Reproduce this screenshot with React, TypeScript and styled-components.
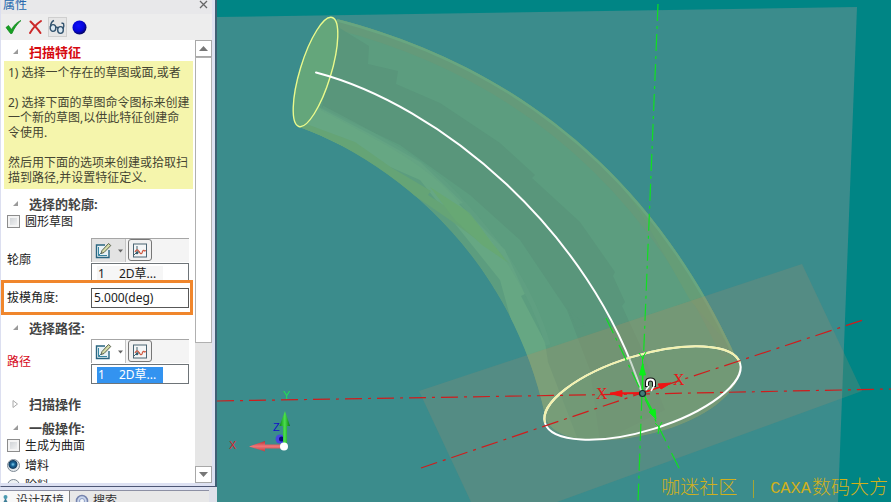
import React from "react";
import styled, { createGlobalStyle } from "styled-components";

const GlobalStyle = createGlobalStyle`
  * { box-sizing: border-box; }
  body {
    margin: 0;
    font-family: "Noto Sans", "Noto Sans CJK SC", sans-serif;
    font-size: 12px;
    line-height: 15px;
    color: #1c1c1c;
  }
  button, input { font: inherit; color: inherit; }
  button { padding: 0; margin: 0; border: 0; background: none; cursor: pointer; }
  h2, p, ul { margin: 0; padding: 0; }
`;

const Page = styled.div`
  display: flex;
  height: 100vh;
  overflow: hidden;
  background: #008585;
`;

const Sidebar = styled.aside`
  flex: none;
  display: flex;
  flex-direction: column;
  width: 217px;
  background: #e9e9eb;
`;

const Panel = styled.section`
  flex: 1;
  min-height: 0;
  display: flex;
  flex-direction: column;
  padding: 0 3px 3px 0;
  border-left: 1px solid #dcdff0;
  border-right: 2px solid #3f5f74;
  border-bottom: 1px solid #4d5674;
  background: #dde1f2;
`;

const TitleBar = styled.header`
  flex: none;
  display: flex;
  justify-content: space-between;
  height: 14px;
  padding: 0 4px 0 2px;
  line-height: 9px;
  color: #2668ad;
  background: #e8e8ea;
`;

const CloseButton = styled.button`
  display: flex;
  width: 9px;
  height: 9px;
`;

const Toolbar = styled.div`
  flex: none;
  display: flex;
  align-items: center;
  gap: 3px;
  height: 26px;
  padding-left: 3px;
  background: #ededed;
`;

const ToolButton = styled.button<{ $boxed?: boolean }>`
  display: flex;
  align-items: center;
  justify-content: center;
  width: 19px;
  height: 20px;
  border: 1px solid ${(p) => (p.$boxed ? "#cfcfcf" : "transparent")};
  background: ${(p) => (p.$boxed ? "#e6e6e6" : "none")};
`;

const Body = styled.div`
  flex: 1;
  min-height: 0;
  display: flex;
  background: #fff;
`;

const Content = styled.div`
  flex: 1;
  min-width: 0;
  overflow: hidden;
`;

const SectionHead = styled.h2<{ $gap: number; $alert?: boolean }>`
  margin-top: ${(p) => p.$gap}px;
  font-size: 13px;
  line-height: 18px;
  font-weight: 700;
  color: ${(p) => (p.$alert ? "#d60a10" : "#444")};
`;

const SectionToggle = styled.button`
  display: flex;
  align-items: center;
  gap: 10px;
  height: 18px;
  padding-left: 10px;
`;

const Note = styled.div`
  display: flex;
  flex-direction: column;
  gap: 15px;
  margin: 0 2px 0 3px;
  padding: 4px 0 4px 4px;
  white-space: nowrap;
  color: #454532;
  background: #f5f5ac;
`;

const OptionRow = styled.label<{ $gap?: number }>`
  display: flex;
  align-items: center;
  gap: 5px;
  height: 16px;
  margin-top: ${(p) => p.$gap ?? 0}px;
  padding-left: 6px;
`;

const CheckBox = styled.input`
  appearance: none;
  width: 13px;
  height: 13px;
  margin: 0;
  border: 1px solid #8c8c8c;
  background: linear-gradient(135deg, #c8ccd0, #f8f8f8);
  box-shadow: inset 0 0 0 2px #f4f4f4;
`;

const RadioButton = styled.input`
  appearance: none;
  width: 13px;
  height: 13px;
  margin: 0;
  border: 1px solid #7c8894;
  border-radius: 50%;
  background: #eef1f3;
  &:checked {
    background: radial-gradient(circle at 45% 40%, #7fd0f0 0, #17669a 2px, #123f63 4px, #e3e8ec 5px);
  }
`;

const Field = styled.div<{ $gap: number }>`
  display: grid;
  grid-template-columns: 84px 1fr;
  align-items: center;
  margin-top: ${(p) => p.$gap}px;
  padding: 0 6px;
`;

const FieldLabel = styled.span<{ $alert?: boolean }>`
  color: ${(p) => (p.$alert ? "#d60a20" : "#1c1c1c")};
`;

const Picker = styled.div`
  display: flex;
  flex-direction: column;
  gap: 1px;
  min-width: 0;
`;

const PickerTools = styled.div`
  display: flex;
  gap: 2px;
  height: 24px;
  border-top: 1px solid #a6a6a6;
  border-left: 1px solid #a6a6a6;
  background: #f4f4f4;
`;

const SplitButton = styled.button<{ $active?: boolean }>`
  display: flex;
  align-items: center;
  gap: 6px;
  width: 34px;
  padding-left: 3px;
  border-right: 1px solid #c4c4c4;
  background: ${(p) => (p.$active ? "#e3e3e3" : "#fff")};
`;

const CurveButton = styled.button`
  display: flex;
  align-items: center;
  justify-content: center;
  width: 24px;
  height: 22px;
  border: 1px solid #777;
  border-radius: 3px;
  background: #f1f1f1;
`;

const PickList = styled.ul<{ $open?: boolean }>`
  height: ${(p) => (p.$open ? 17 : 20)}px;
  padding: 2px 5px;
  border: 1px solid #6e7478;
  border-bottom-width: ${(p) => (p.$open ? 0 : 1)}px;
  list-style: none;
  background: #fff;
  overflow: hidden;
`;

const PickItem = styled.li<{ $selected?: boolean }>`
  display: flex;
  gap: 14px;
  width: 66px;
  padding-left: 1px;
  line-height: 16px;
  white-space: nowrap;
  color: ${(p) => (p.$selected ? "#fff" : "#1c1c1c")};
  background: ${(p) => (p.$selected ? "#3393f0" : "#f6f6f6")};
`;

const Highlight = styled.div`
  display: grid;
  grid-template-columns: 84px 1fr;
  align-items: center;
  height: 35px;
  margin-right: 2px;
  padding: 0 1px 0 3px;
  border: 3px solid #f0862c;
`;

const AngleInput = styled.input`
  width: 100%;
  min-width: 0;
  height: 20px;
  padding: 0 2px;
  border: 1px solid #585858;
  background: #fff;
`;

const ScrollBar = styled.div`
  flex: none;
  display: grid;
  grid-template-rows: 17px 7fr 3fr 17px;
  width: 17px;
  background: #e6e6e6;
`;

const ScrollButton = styled.button`
  display: flex;
  align-items: center;
  justify-content: center;
  border: 1px solid #a8a8a8;
  background: #fff;
`;

const ScrollThumb = styled.div`
  border: 1px solid #b0b0b0;
  background: #fff;
`;

const TabStrip = styled.nav`
  flex: none;
  height: 15px;
  padding-top: 3px;
  border-right: 8px solid #dfe1ea;
  background: #e8e8e8;
  box-shadow: inset 0 3px 0 #dde1f2, inset 0 4px 0 #8d90a4;
  overflow: hidden;
`;

const TabRow = styled.div`
  display: flex;
`;

const Tab = styled.button<{ $active?: boolean }>`
  display: flex;
  align-items: center;
  gap: 4px;
  height: 20px;
  padding: 0 5px 0 ${(p) => (p.$active ? 0 : 5)}px;
  border-top: 1px solid #8d90a4;
  border-right: ${(p) => (p.$active ? "1px solid #808080" : "0")};
  color: #333;
  background: ${(p) => (p.$active ? "#f8f8f8" : "transparent")};
`;

const Viewport = styled.main`
  position: relative;
  flex: 1;
  min-width: 0;
`;

const SceneSvg = styled.svg`
  display: block;
  width: 100%;
  height: 100%;
`;

const Watermark = styled.div`
  position: absolute;
  right: 3px;
  bottom: 0;
  display: flex;
  align-items: center;
  gap: 1px;
  font-family: "Liberation Mono", "Noto Sans CJK SC", monospace;
  font-weight: 300;
  font-size: 19px;
  line-height: 26px;
  color: #d0b01c;
`;

const WatermarkBar = styled.span`
  width: 1px;
  height: 18px;
  margin: 0 15px;
  background: #a5a534;
`;

const WatermarkLatin = styled.span`
  font-size: 17px;
`;

const OpenMark = () => (
  <svg width="8" height="8" aria-hidden="true"><path d="M7 1V6H2Z" fill="#9a9a9a" /></svg>
);
const ClosedMark = () => (
  <svg width="8" height="8" aria-hidden="true"><path d="M2 0.5 6.5 4 2 7.5Z" fill="#fff" stroke="#aaa" /></svg>
);

const CheckIcon = () => (
  <svg width="17" height="16" viewBox="0 0 17 16" aria-hidden="true">
    <path d="M1 8.5 3.5 6.5 6.5 10.5C9 6 12 3 16 1.500 12 5 9 9.500 7 14.500H5.500Z" fill="#16a022" stroke="#0c8418" strokeWidth=".7" />
  </svg>
);
const CrossIcon = () => (
  <svg width="15" height="16" viewBox="0 0 15 16" aria-hidden="true">
    <path d="M2.500 2.500C6 6 10 10 12.500 14M13 2C8.500 5 5 9 2 14" fill="none" stroke="#cc2929" strokeWidth="2" strokeLinecap="round" />
  </svg>
);
const GlassesIcon = () => (
  <svg width="17" height="16" viewBox="0 0 17 16" aria-hidden="true">
    <g fill="#dce9f2" stroke="#31526e" strokeWidth="1.400">
      <ellipse cx="4" cy="9" rx="2.800" ry="3.400" />
      <ellipse cx="11.500" cy="11" rx="2.800" ry="3.400" />
      <path d="M6.500 8.500Q8 7.500 9 9.500M1.500 8Q1.500 3 5 1.500M14 10Q15.500 7 14.500 4.500L12.500 4" fill="none" />
    </g>
  </svg>
);
const SphereIcon = () => (
  <svg width="15" height="15" viewBox="0 0 15 15" aria-hidden="true">
    <defs>
      <radialGradient id="sphere" cx=".42" cy=".38" r=".6">
        <stop offset="0" stopColor="#1010ff" /><stop offset=".65" stopColor="#0505d8" /><stop offset="1" stopColor="#050568" />
      </radialGradient>
    </defs>
    <circle cx="7.500" cy="7.500" r="7" fill="url(#sphere)" />
  </svg>
);
const SketchIcon = () => (
  <svg width="17" height="17" viewBox="0 0 17 17" aria-hidden="true">
    <path d="M10 3H1.500V15.500H14V8" fill="#e8f2f6" stroke="#2a6580" strokeWidth="1.400" />
    <path d="M3.500 5V13.500H12M3.500 13.500 6 11" fill="none" stroke="#3785a0" />
    <path d="M6 11.500 7 8.500 13.500 1.500 15.800 3.500 9 10.500Z" fill="#d4dca8" stroke="#59604e" />
  </svg>
);
const CurveIcon = () => (
  <svg width="16" height="15" viewBox="0 0 16 15" aria-hidden="true">
    <rect x="1.500" y="1" width="13" height="13" fill="#f4f6f7" stroke="#4a6473" />
    <path d="M2 12 5 9V3M5 9H8" fill="none" stroke="#43606c" />
    <path d="M3 9Q5 5 7 8.500T10 10Q11 6 12.500 8L14 7.500" fill="none" stroke="#cf5840" strokeWidth="1.200" />
    <circle cx="5" cy="10" r="1.300" fill="#345e70" />
  </svg>
);
const DropIcon = () => (
  <svg width="6" height="4" aria-hidden="true"><path d="M0 .5H5L2.500 3.500Z" fill="#666" /></svg>
);

const Section = ({ title, gap, alert, closed }: { title: string; gap: number; alert?: boolean; closed?: boolean }) => (
  <SectionHead $gap={gap} $alert={alert}>
    <SectionToggle type="button" aria-expanded={!closed}>
      {closed ? <ClosedMark /> : <OpenMark />}
      {title}
    </SectionToggle>
  </SectionHead>
);

const SketchPicker = ({ label, active, selected }: { label: string; active?: boolean; selected?: boolean }) => (
  <Picker>
    <PickerTools>
      <SplitButton type="button" $active={active} aria-label={`${label} 草图`}><SketchIcon /><DropIcon /></SplitButton>
      <CurveButton type="button" aria-label={`${label} 曲线`}><CurveIcon /></CurveButton>
    </PickerTools>
    <PickList $open={active} role="listbox" aria-label={label}>
      <PickItem $selected={selected} role="option" aria-selected={!!selected}>
        <span>1</span><span>2D草...</span>
      </PickItem>
    </PickList>
  </Picker>
);

const OUTLINE = "M337 19C475 55 635 140 734 353L741 366C741 395 700 420 665 430C610 447 550 444 545 415C510 255 392 160 299 127Z";

const Scene = () => (
  <SceneSvg viewBox="217 0 674 502" preserveAspectRatio="xMidYMid slice" role="img" aria-label="3D">
    <defs>
      <clipPath id="pipe"><path d={OUTLINE} /></clipPath>
      <linearGradient id="greenArrow"><stop offset="0" stopColor="#0a8a14" /><stop offset=".5" stopColor="#4be04e" /><stop offset="1" stopColor="#087a10" /></linearGradient>
      <linearGradient id="redArrow" x2="0" y2="1"><stop offset="0" stopColor="#b52f34" /><stop offset=".5" stopColor="#f07678" /><stop offset="1" stopColor="#c03c40" /></linearGradient>
    </defs>
    <rect x="217" width="674" height="502" fill="#008585" />
    <path d="M217 17 857 7 838 502H217Z" fill="#3b8c8c" />

    <g clipPath="url(#pipe)">
      <path d={OUTLINE} fill="#5c9d7f" />
      <path d="M337 24C475 60 630 145 727 356" fill="none" stroke="#649a7a" strokeWidth="11" />
      <path d="M535 108C580 140 615 175 640 212L690 300 735 352 700 230 600 130Z" fill="#659d77" />
      <path d="M337 19C475 55 635 140 734 353" fill="none" stroke="#68a680" strokeWidth="5" />
      <path d="M333 24 369 46 368 64 398 71 396 84 440 103 500 143 535 175 532 178 580 222 615 272 613 276 625 302 622 306 640 345 665 410 600 442 590 370 567 310 520 240 470 195 400 145 322 108Z" fill="#59967b" />
      <path d="M318 107 370 134 420 162 463 203 459 204 505 250 525 294 521 296 545 342 548 362 580 445 540 425 500 280 420 180 299 127Z" fill="#66a783" />
      <path d="M301 122 355 142 392 168 431 191 428 195 470 222 495 250 509 263 480 242 450 220 380 172 299 127Z" fill="#65a476" />
      <path d="M430 187 470 213 492 243 510 264 482 245 455 220Z" fill="#67a874" />
      <path d="M322 108C380 138 430 163 461 201C510 253 535 300 548 345" fill="none" stroke="#61a183" strokeWidth="5" opacity=".5" />
      <path d="M567 307 575 316 586 325 577 328Z" fill="#59967b" />
    </g>

    <path d="M419 391 802 264 862 391 557 502H471Z" fill="#a08c6c" opacity=".25" />
    <path d="M419 391 802 264 862 391 557 502H471Z" fill="#b79a58" opacity=".1" clipPath="url(#pipe)" />

    <ellipse cx="315.500" cy="72" rx="15.500" ry="57" transform="rotate(17 315.500 72)" fill="#64a67b" stroke="#eafa8c" strokeWidth="1.400" />
    <path d="M316 72.500C440 105 590 230 642 393" fill="none" stroke="#fff" strokeWidth="2" strokeLinecap="round" />
    <ellipse cx="642.500" cy="393" rx="102" ry="37.500" transform="rotate(-17.100 642.500 393)" fill="#719a79" fillOpacity=".35" stroke="#fff" strokeWidth="2" />
    <path d="M545 423A102 37.500 -17.100 0 1 740 363" fill="none" stroke="#f3f2ae" strokeWidth="2" />

    <g fill="none" strokeWidth="1.200">
      <g stroke="#d01c1c" strokeDasharray="17 6 3 6">
        <path d="M217 401 642 394 891 389" />
        <path d="M421 468 642 393 863 320" />
      </g>
      <g stroke="#10e020" strokeDasharray="17 5 3 5">
        <path d="M658 4 642 393 638 502" />
        <path d="M606 318 642 393 680 470" />
      </g>
    </g>

    <g fill="#f01414" stroke="#f01414">
      <path d="M642 393 610 393.500" strokeWidth="2" />
      <path d="M610 393.500 622 390.500V396.500Z" />
      <path d="M642 393 660 387" strokeWidth="1.500" />
      <path d="M671 383 658 384 661 389Z" />
    </g>
    <g fill="#08f018" stroke="#08f018">
      <path d="M642.500 393V375M643 393 653 412" strokeWidth="1.500" />
      <path d="M642.500 364 639.500 375H645.500ZM656 419 649 412 655 409Z" />
      <path d="M639 353 642.500 358 646 352M642.500 358V364M655 423 659 427 662 422M659 427 658 434" fill="none" strokeWidth="1" />
    </g>
    <g fill="#e41a1a" fontFamily="Liberation Serif, serif" fontSize="16">
      <text x="596" y="399">X</text>
      <text x="673" y="385">X</text>
    </g>
    <g fill="none">
      <path d="M647 387V382.500Q647 379.500 650.500 379.500T654 382.500V387" stroke="#111" strokeWidth="4" />
      <path d="M647 386V382.500Q647 379.500 650.500 379.500T654 382.500V386" stroke="#fff" strokeWidth="2" />
      <path d="M649 386 646 390M654 386 651 391" stroke="#fff" strokeWidth="1.500" />
    </g>
    <circle cx="642.500" cy="393.500" r="3" fill="#437c78" stroke="#122b2b" strokeWidth="1.200" />

    <g fontFamily="Liberation Sans, sans-serif" fontSize="11">
      <text x="229" y="449" fill="#d8232b">X</text>
      <text x="283" y="399" fill="#20de50">Y</text>
      <text x="273" y="431" fill="#1111c8">Z</text>
    </g>
    <circle cx="280" cy="439" r="4.500" fill="#4545e0" />
    <circle cx="281.500" cy="439" r="2.500" fill="#080878" />
    <path d="M283 446V426H279.500L285 411 290 426H287V446Z" fill="url(#greenArrow)" />
    <path d="M284 444.500H265V441L249 446.500 265 451.500V448.500H284Z" fill="url(#redArrow)" />
    <circle cx="284" cy="446.500" r="4" fill="#fff" />
  </SceneSvg>
);

export default function App() {
  return (
    <>
      <GlobalStyle />
      <Page>
        <Sidebar>
          <Panel>
            <TitleBar>
              <span>属性</span>
              <CloseButton type="button" aria-label="关闭">
                <svg width="9" height="9" aria-hidden="true"><path d="M1 1 8 8M8 1 1 8" stroke="#666" strokeWidth="1.300" /></svg>
              </CloseButton>
            </TitleBar>
            <Toolbar>
              <ToolButton type="button" aria-label="确定"><CheckIcon /></ToolButton>
              <ToolButton type="button" aria-label="取消"><CrossIcon /></ToolButton>
              <ToolButton type="button" aria-label="预览" $boxed><GlassesIcon /></ToolButton>
              <ToolButton type="button" aria-label="应用"><SphereIcon /></ToolButton>
            </Toolbar>
            <Body>
              <Content>
                <Section title="扫描特征" gap={3} alert />
                <Note>
                  <p>1) 选择一个存在的草图或面,或者</p>
                  <p>2) 选择下面的草图命令图标来创建<br />一个新的草图,以供此特征创建命<br />令使用.</p>
                  <p>然后用下面的选项来创建或拾取扫<br />描到路径,并设置特征定义.</p>
                </Note>
                <Section title="选择的轮廓:" gap={6} />
                <OptionRow><CheckBox type="checkbox" />圆形草图</OptionRow>
                <Field $gap={9}>
                  <FieldLabel>轮廓</FieldLabel>
                  <SketchPicker label="轮廓" active />
                </Field>
                <Highlight>
                  <label htmlFor="angle">拔模角度:</label>
                  <AngleInput id="angle" defaultValue="5.000(deg)" />
                </Highlight>
                <Section title="选择路径:" gap={4} />
                <Field $gap={2}>
                  <FieldLabel $alert>路径</FieldLabel>
                  <SketchPicker label="路径" selected />
                </Field>
                <Section title="扫描操作" gap={11} closed />
                <Section title="一般操作:" gap={6} />
                <OptionRow><CheckBox type="checkbox" />生成为曲面</OptionRow>
                <OptionRow $gap={4}><RadioButton type="radio" name="material" defaultChecked />增料</OptionRow>
                <OptionRow $gap={4}><RadioButton type="radio" name="material" />除料</OptionRow>
              </Content>
              <ScrollBar>
                <ScrollButton type="button" aria-label="向上"><svg width="9" height="5" aria-hidden="true"><path d="M0 5 4.500 0 9 5Z" fill="#777" /></svg></ScrollButton>
                <ScrollThumb />
                <span />
                <ScrollButton type="button" aria-label="向下"><svg width="9" height="5" aria-hidden="true"><path d="M0 0H9L4.500 5Z" fill="#777" /></svg></ScrollButton>
              </ScrollBar>
            </Body>
          </Panel>
          <TabStrip>
            <TabRow>
              <Tab type="button" $active>
                <svg width="12" height="14" viewBox="0 0 12 14" aria-hidden="true"><path d="M5.500 3V6M5.500 6 2 12M5.500 6 9 12" stroke="#3c7d96" strokeWidth="1.500" /><circle cx="5.500" cy="3" r="2" fill="#4c9ab0" /></svg>
                设计环境
              </Tab>
              <Tab type="button">
                <svg width="14" height="14" viewBox="0 0 14 14" aria-hidden="true"><circle cx="7" cy="7" r="5.500" fill="#c9d6ec" stroke="#7583ad" strokeWidth="1.500" /><circle cx="7" cy="7" r="2.500" fill="#f4f7fc" stroke="#8c9cc4" /></svg>
                搜索
              </Tab>
            </TabRow>
          </TabStrip>
        </Sidebar>
        <Viewport>
          <Scene />
          <Watermark>
            <span>咖迷社区</span>
            <WatermarkBar />
            <WatermarkLatin>CAXA</WatermarkLatin>
            <span>数码大方</span>
          </Watermark>
        </Viewport>
      </Page>
    </>
  );
}
